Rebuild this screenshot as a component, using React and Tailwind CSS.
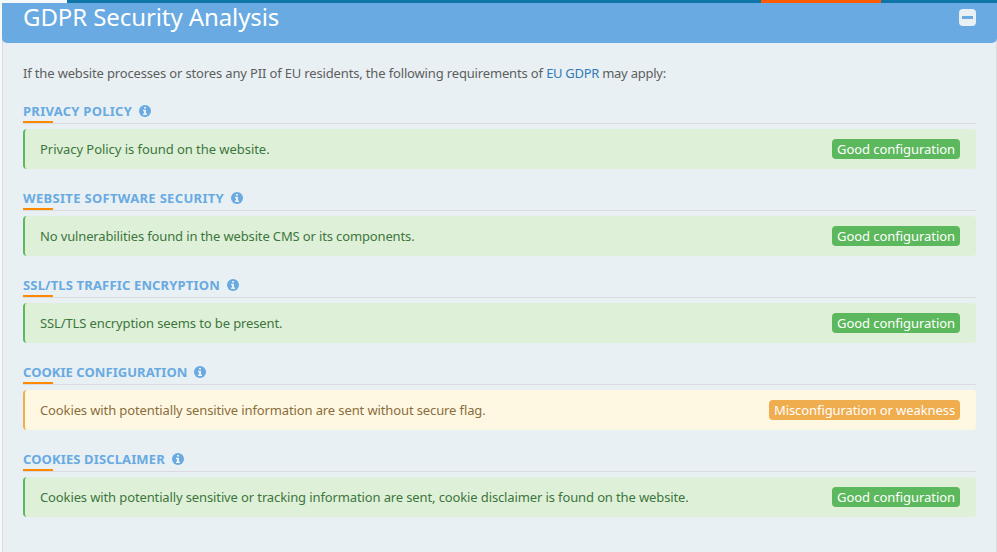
const sections = [
  { title: "PRIVACY POLICY", text: "Privacy Policy is found on the website.", ok: true, ts: "tracking-[0.27px]", bs: "tracking-[-0.05px]" },
  { title: "WEBSITE SOFTWARE SECURITY", text: "No vulnerabilities found in the website CMS or its components.", ok: true, ts: "tracking-[0.32px]", bs: "tracking-[-0.14px]" },
  { title: "SSL/TLS TRAFFIC ENCRYPTION", text: "SSL/TLS encryption seems to be present.", ok: true, ts: "tracking-[0.16px]", bs: "tracking-[-0.115px]" },
  { title: "COOKIE CONFIGURATION", text: "Cookies with potentially sensitive information are sent without secure flag.", ok: false, ts: "tracking-[0.05px]", bs: "tracking-[-0.118px]" },
  { title: "COOKIES DISCLAIMER", text: "Cookies with potentially sensitive or tracking information are sent, cookie disclaimer is found on the website.", ok: true, ts: "tracking-[0.12px]", bs: "tracking-[-0.123px]" },
];

function InfoIcon() {
  return (
    <svg viewBox="0 0 12 12" className="size-3 shrink-0">
      <circle cx="6" cy="6" r="6" fill="#68aae1" />
      <path d="M5 2h2v1.6H5zM4 4.8h3v3.8h1V10H4V8.6h1V6.2H4z" fill="#e8f0f4" />
    </svg>
  );
}

function Section({ title, text, ok, ts, bs }) {
  return (
    <section className="h-[87px]">
      <div className="flex h-[23px] flex-col border-b border-[#dadbde]">
        <h2 className="flex h-5 items-center gap-[7px] whitespace-nowrap text-[13px] font-bold leading-5 text-[#68aae1]">
          <span className={ts}>{title}</span>
          <InfoIcon />
        </h2>
        <div className="h-[2px] w-[30px] shrink-0 bg-[#ff8a00]" />
      </div>
      <div
        className={
          "mt-[5px] flex h-10 items-center justify-between rounded-[4px] border-l-2 pl-[15px] pr-4 text-[13px] leading-5 " +
          (ok ? "border-[#5cb85c] bg-[#dff0d8] text-[#3c763d]" : "border-[#f0ad4e] bg-[#fef8e3] text-[#8a6d3b]")
        }
      >
        <span className={"whitespace-nowrap " + bs}>{text}</span>
        <span
          className={
            "flex h-5 items-center justify-center whitespace-nowrap rounded-[4px] text-[13px] text-white " +
            (ok ? "w-32 bg-[#5cb85c] tracking-[-0.05px]" : "w-[191px] bg-[#f0ad4e] tracking-[-0.08px]")
          }
        >
          {ok ? "Good configuration" : "Misconfiguration or weakness"}
        </span>
      </div>
    </section>
  );
}

export default function App() {
  return (
    <div className="h-[552px] w-[997px] overflow-hidden bg-[#f5f9fa] font-['Noto_Sans',sans-serif]">
      <div className="flex h-[3px] pl-[67px]">
        <div className="w-[694px] bg-[#0d75a8]" />
        <div className="w-[120px] bg-[#ff5c00]" />
        <div className="flex-1 bg-[#0d75a8]" />
      </div>
      <div className="ml-[2px] h-[549px] border-x border-[#dadbde] bg-[#e8f0f4]">
        <header className="-mx-px flex h-10 justify-between rounded-b-[5px] bg-[#68aae1] pl-[21px] pr-[21px] text-white">
          <h1 className="whitespace-nowrap text-[24px] leading-[28px] tracking-[-0.09px]">GDPR Security Analysis</h1>
          <button className="mt-[6px] flex size-[17px] items-center justify-center rounded-[4px] bg-[#e8f0f4]">
            <span className="h-[3px] w-[11px] bg-[#68aae1]" />
          </button>
        </header>
        <main className="px-5 pt-5">
          <p className="h-[38px] whitespace-nowrap text-[13px] leading-5 tracking-[-0.153px] text-[#5e5e5e]">
            If the website processes or stores any PII of EU residents, the following requirements of{" "}
            <a className="tracking-[-0.3px] text-[#337ab7]">EU GDPR</a>
            <span className="tracking-[-0.25px]"> may apply:</span>
          </p>
          {sections.map((s) => (
            <Section key={s.title} {...s} />
          ))}
        </main>
      </div>
    </div>
  );
}
